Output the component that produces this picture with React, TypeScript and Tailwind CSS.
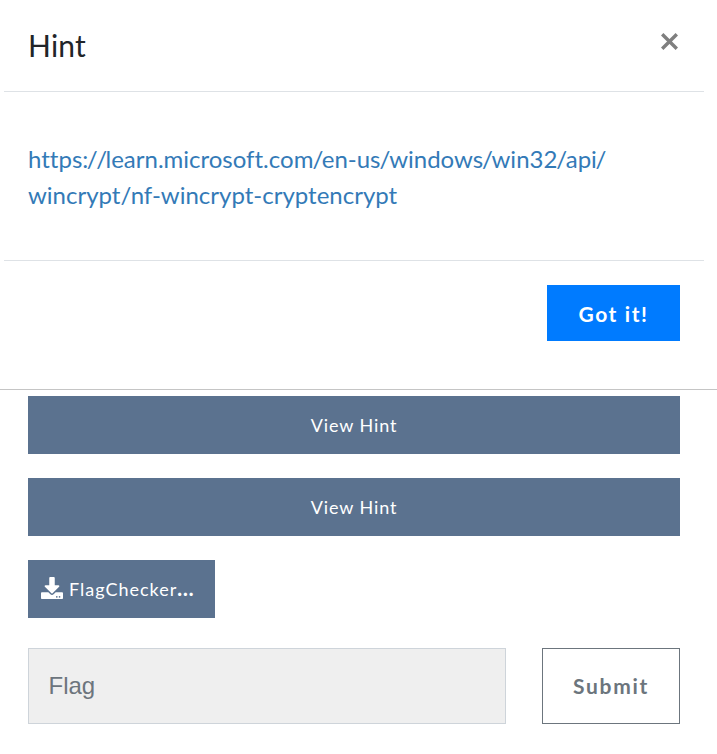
export default function App() {
  return (
    <main className="h-[754px] w-[717px] overflow-hidden bg-white font-[Lato,sans-serif] [font-variant-ligatures:none]">
      <section className="h-[390px] border-b border-[#c5c5c5]">
        <header className="mx-1 mr-[13px] flex h-[92px] items-start justify-between border-b border-[#dee2e6] pr-[26px] pl-6">
          <h1 className="mt-[23px] text-[30px] leading-[45px] tracking-[0.2px] text-[#212529]">Hint</h1>
          <button aria-label="Close" className="mt-[33px] text-[#7f7f7f]">
            <svg viewBox="0 0 17 17" className="size-[17px]" fill="none" stroke="currentColor" strokeWidth="3.4"><path d="M1.200 1.200l14.600 14.600M15.800 1.200L1.200 15.800" /></svg>
          </button>
        </header>
        <div className="mx-1 mr-[13px] h-[169px] border-b border-[#dee2e6] px-6 pt-[49px]">
          <a className="block text-[24px] leading-[36px] text-[#337ab7]"><span>https:</span><span className="-ml-[1.5px]">/</span><span className="-ml-[1.5px]">/</span><span className="-ml-[1.5px]">learn.microsoft.com</span><span className="-ml-px">/</span><span className="-ml-[1.5px]">en-us</span><span className="-ml-px">/</span><span className="-ml-[1.250px]">windows</span><span className="-ml-[1.250px]">/</span><span className="-ml-[1.250px]">win32</span><span className="-ml-[1.250px]">/</span><span className="-ml-[1.250px]">api</span><span className="-ml-[1.500px]">/</span><br />wincrypt/nf-wincrypt-cryptencrypt</a>
        </div>
        <footer className="flex justify-end pt-6 pr-[37px]">
          <button className="h-14 w-[133px] bg-[#007bff] pt-[2px] text-[21px] font-bold tracking-[1.6px] text-white">Got it!</button>
        </footer>
      </section>
      <section className="pt-[6px] pr-[37px] pl-7">
        <button className="block h-[58px] w-full bg-[#5b728f] text-[18px] tracking-[0.9px] text-white">View Hint</button>
        <button className="mt-6 block h-[58px] w-full bg-[#5b728f] text-[18px] tracking-[0.9px] text-white">View Hint</button>
        <button className="mt-6 flex h-[58px] w-[187px] items-center bg-[#5b728f] pl-[13px] text-[18px] tracking-[1px] text-white">
          <svg viewBox="0 0 512 512" className="mr-[6px] mb-[3px] size-[22px]" fill="currentColor"><path d="M216 0h80c13.3 0 24 10.7 24 24v168h87.700c17.800 0 26.700 21.500 14.100 34.100L269.700 378.300c-7.500 7.500-19.800 7.500-27.300 0L90.100 226.100c-12.600-12.600-3.700-34.100 14.100-34.100H192V24c0-13.300 10.700-24 24-24zm296 376v112c0 13.300-10.700 24-24 24H24c-13.300 0-24-10.700-24-24V376c0-13.300 10.700-24 24-24h146.700l49 49c20.100 20.100 52.500 20.100 72.600 0l49-49H488c13.300 0 24 10.700 24 24zm-124 88c0-11-9-20-20-20s-20 9-20 20 9 20 20 20 20-9 20-20zm64 0c0-11-9-20-20-20s-20 9-20 20 9 20 20 20 20-9 20-20z" /></svg>
          <span>FlagChecker<b className="text-[20px] leading-none font-black tracking-[1px]">...</b></span>
        </button>
        <form className="mt-[30px] flex justify-between">
          <input placeholder="Flag" className="h-[76px] w-[478px] border border-[#ced4da] bg-[#efefef] px-[19.500px] font-['Liberation_Sans',sans-serif] text-[24px] placeholder:text-[#6c757d]" />
          <button type="button" className="h-[76px] w-[138px] border border-[#6c757d] text-[21px] font-bold tracking-[1.7px] text-[#6c757d]">Submit</button>
        </form>
      </section>
    </main>
  );
}
